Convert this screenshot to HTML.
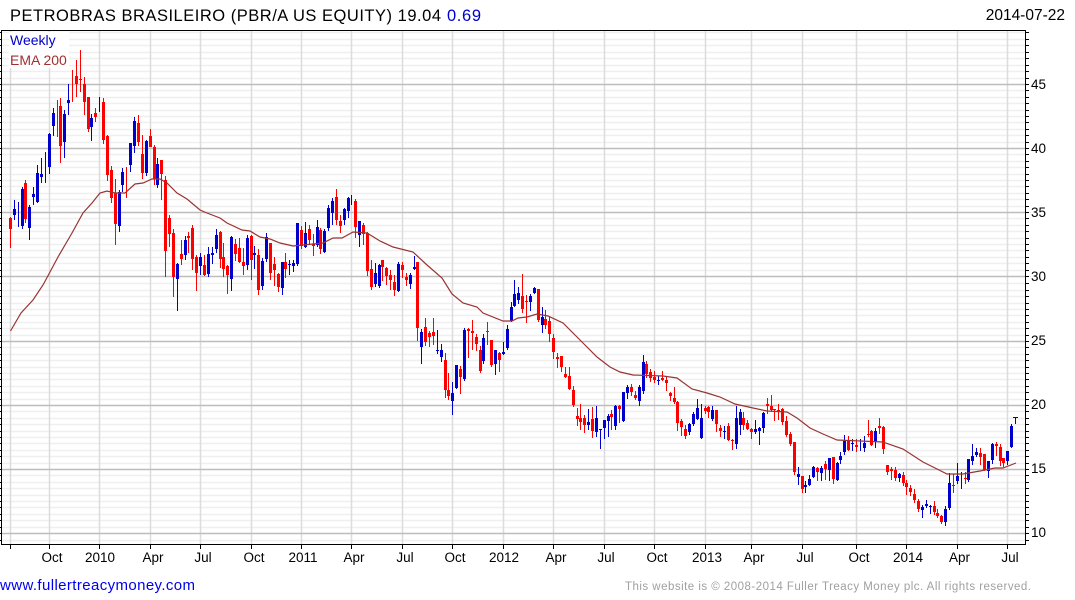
<!DOCTYPE html>
<html><head><meta charset="utf-8"><title>PBR/A</title>
<style>html,body{margin:0;padding:0;background:#fff;width:1075px;height:600px;overflow:hidden}svg{display:block}text{font-family:"Liberation Sans",Arial,sans-serif}</style></head>
<body>
<svg xmlns="http://www.w3.org/2000/svg" width="1075" height="600" viewBox="0 0 1075 600">
<defs>
<path id="r" d="M0 32.5H1030M0 39.5H1030M0 45.5H1030M0 52.5H1030M0 58.5H1030M0 65.5H1030M0 71.5H1030M0 78.5H1030M0 90.5H1030M0 97.5H1030M0 103.5H1030M0 110.5H1030M0 116.5H1030M0 122.5H1030M0 129.5H1030M0 135.5H1030M0 142.5H1030M0 154.5H1030M0 161.5H1030M0 167.5H1030M0 174.5H1030M0 180.5H1030M0 186.5H1030M0 193.5H1030M0 199.5H1030M0 206.5H1030M0 218.5H1030M0 225.5H1030M0 231.5H1030M0 238.5H1030M0 244.5H1030M0 250.5H1030M0 257.5H1030M0 263.5H1030M0 270.5H1030M0 283.5H1030M0 290.5H1030M0 296.5H1030M0 303.5H1030M0 309.5H1030M0 315.5H1030M0 322.5H1030M0 328.5H1030M0 335.5H1030M0 347.5H1030M0 354.5H1030M0 360.5H1030M0 367.5H1030M0 373.5H1030M0 379.5H1030M0 386.5H1030M0 392.5H1030M0 399.5H1030M0 411.5H1030M0 418.5H1030M0 424.5H1030M0 431.5H1030M0 437.5H1030M0 443.5H1030M0 450.5H1030M0 456.5H1030M0 463.5H1030M0 475.5H1030M0 482.5H1030M0 488.5H1030M0 495.5H1030M0 501.5H1030M0 507.5H1030M0 514.5H1030M0 520.5H1030M0 527.5H1030M0 540.5H1030"/>
<path id="m" d="M0 84.5H1030M0 148.5H1030M0 212.5H1030M0 276.5H1030M0 341.5H1030M0 405.5H1030M0 469.5H1030M0 533.5H1030"/>
<clipPath id="pl"><rect x="2" y="31" width="1024" height="513"/></clipPath>
<clipPath id="tk"><rect x="0" y="31" width="1029" height="513"/></clipPath>
</defs>
<g shape-rendering="crispEdges" fill="none" clip-path="url(#tk)">
<use href="#r" stroke="#000"/><use href="#m" stroke="#000"/>
</g>
<rect x="1" y="30" width="1025" height="515" fill="#fff"/>
<g fill="none" clip-path="url(#pl)">
<use href="#r" stroke="#efefef" stroke-width="1.5"/>
<path stroke="#dcdcdc" stroke-width="1.5" d="M10.5 31V544M49.5 31V544M99.5 31V544M150.5 31V544M200.5 31V544M251.5 31V544M301.5 31V544M351.5 31V544M402.5 31V544M452.5 31V544M503.5 31V544M553.5 31V544M604.5 31V544M654.5 31V544M705.5 31V544M751.5 31V544M802.5 31V544M856.5 31V544M906.5 31V544M957.5 31V544M1007.5 31V544"/>
<use href="#m" stroke="#bdbdbd" stroke-width="1.5"/>
</g>
<rect x="9" y="32" width="60" height="36" fill="#fff"/>
<g shape-rendering="crispEdges" fill="none">
<path stroke="#000" d="M1.5 30V545M1 30.5H1026M1 544.5H1026M1025.5 30V545"/>
<path stroke="#000" d="M10.5 545V549M49.5 545V549M99.5 545V549M150.5 545V549M200.5 545V549M251.5 545V549M301.5 545V549M351.5 545V549M402.5 545V549M452.5 545V549M503.5 545V549M553.5 545V549M604.5 545V549M654.5 545V549M705.5 545V549M751.5 545V549M802.5 545V549M856.5 545V549M906.5 545V549M957.5 545V549M1007.5 545V549"/>
</g>

<!-- blue wicks -->
<path fill="none" stroke="#0000cc" stroke-width="1" shape-rendering="crispEdges" d="M14.5 200V220M18.5 202V227M22.5 187V229M29.5 205V240M33.5 187V205M37.5 165V203M41.5 158V183M45.5 152V183M49.5 133V174M53.5 108V136M64.5 110V158M68.5 84V115M91.5 114V141M99.5 97V112M119.5 190V232M122.5 168V192M130.5 143V172M134.5 117V153M146.5 140V176M157.5 158V188M177.5 263V311M185.5 236V260M200.5 253V275M208.5 247V277M212.5 247V264M216.5 229V253M231.5 236V291M247.5 235V270M254.5 246V269M262.5 258V290M266.5 233V262M282.5 262V295M289.5 260V275M293.5 260V272M297.5 223V266M305.5 222V248M317.5 220V247M324.5 229V253M328.5 205V231M332.5 198V225M344.5 208V225M348.5 197V218M351.5 195V205M359.5 221V247M375.5 263V287M379.5 264V288M398.5 262V292M410.5 273V289M414.5 256V270M421.5 329V364M437.5 330V354M441.5 344V362M452.5 382V415M456.5 365V389M464.5 328V381M483.5 334V364M495.5 350V375M503.5 342V355M507.5 325V350M511.5 302V322M514.5 280V307M518.5 287V304M530.5 294V311M534.5 287V294M542.5 307V333M588.5 409V430M596.5 406V437M600.5 429V449M604.5 420V439M608.5 414V437M615.5 405V430M623.5 392V422M627.5 385V399M639.5 385V406M643.5 355V394M658.5 376V385M689.5 423V435M693.5 412V426M697.5 399V420M701.5 404V439M712.5 406V421M724.5 426V439M736.5 406V449M740.5 409V435M755.5 420V434M759.5 427V445M763.5 412V433M798.5 467V485M805.5 481V493M809.5 475V486M813.5 466V478M821.5 466V481M829.5 458V481M837.5 462V481M840.5 452V464M844.5 435V455M852.5 439V451M860.5 439V451M864.5 436V452M875.5 428V448M899.5 473V482M922.5 505V518M926.5 500V508M930.5 505V514M945.5 506V526M949.5 473V510M957.5 463V484M961.5 472V489M968.5 459V482M972.5 444V465M976.5 448V457M988.5 461V478M992.5 443V464M1007.5 451V465M1011.5 424V448M1015.5 417V424M1013 417.5H1018"/>
<!-- blue bodies -->
<path fill="none" stroke="#0000cc" stroke-width="3" shape-rendering="crispEdges" d="M14.5 209V215M22.5 189V226M29.5 207V228M33.5 194V197M37.5 173V202M41.5 174V177M49.5 134V167M53.5 113V126M64.5 114V142M68.5 100V103M91.5 118V127M119.5 192V226M122.5 172V185M130.5 143V165M134.5 121V146M146.5 141V173M157.5 164V185M177.5 264V279M185.5 240V255M200.5 257V266M208.5 254V274M212.5 253V255M216.5 235V249M231.5 237V279M247.5 238V265M254.5 253V255M262.5 261V286M266.5 237V259M282.5 262V288M289.5 264V265M293.5 263V266M297.5 223V264M305.5 233V247M317.5 227V245M324.5 231V252M328.5 208V228M332.5 201V213M344.5 209V220M348.5 198V211M359.5 221V235M375.5 273V284M379.5 265V286M398.5 264V291M410.5 275V284M414.5 267V269M421.5 332V347M437.5 350V351M441.5 350V357M452.5 393V401M456.5 365V388M464.5 330V379M483.5 338V361M495.5 350V364M503.5 352V354M507.5 329V348M511.5 307V321M514.5 294V306M518.5 293V300M530.5 296V302M534.5 288V293M542.5 317V325M588.5 422V425M596.5 418V432M600.5 429V430M604.5 420V428M608.5 416V421M615.5 406V426M623.5 392V421M627.5 387V393M639.5 387V401M643.5 362V391M658.5 380V381M689.5 424V432M693.5 414V424M697.5 408V419M701.5 418V438M712.5 410V419M724.5 431V432M736.5 418V444M740.5 412V425M755.5 429V432M759.5 428V431M763.5 413V428M798.5 474V477M805.5 485V487M809.5 479V485M813.5 467V477M821.5 468V473M829.5 458V470M837.5 463V480M840.5 456V460M844.5 441V452M852.5 443V444M864.5 443V448M875.5 431V442M899.5 474V478M922.5 507V510M926.5 504V506M930.5 506V507M945.5 509V522M949.5 483V508M957.5 476V481M968.5 459V480M972.5 456V461M976.5 452V455M988.5 461V471M992.5 444V460M1007.5 451V461M1011.5 426V447"/>
<!-- red wicks -->
<path fill="none" stroke="#ff0000" stroke-width="1" shape-rendering="crispEdges" d="M10.5 217V248M25.5 180V223M57.5 100V137M60.5 98V163M72.5 70V102M76.5 60V97M80.5 50V92M84.5 77V115M88.5 97V132M95.5 108V122M103.5 98V144M107.5 135V181M111.5 166V203M115.5 179V245M126.5 167V198M138.5 115V146M142.5 135V179M150.5 129V147M154.5 145V185M161.5 160V200M165.5 176V277M169.5 215V247M173.5 229V297M181.5 240V265M188.5 232V253M192.5 225V270M196.5 255V291M204.5 255V276M220.5 231V268M223.5 243V277M227.5 265V294M235.5 239V261M239.5 238V263M243.5 248V275M251.5 235V280M258.5 249V295M270.5 243V280M274.5 257V286M278.5 273V292M285.5 253V278M301.5 226V249M309.5 225V244M313.5 234V256M320.5 228V254M336.5 189V225M340.5 215V233M355.5 199V238M363.5 223V245M367.5 232V276M371.5 260V290M382.5 260V281M386.5 267V285M390.5 270V290M394.5 275V296M402.5 262V278M406.5 273V286M417.5 262V341M425.5 318V346M429.5 331V347M433.5 318V345M445.5 353V398M448.5 373V400M460.5 366V394M468.5 328V358M472.5 320V350M476.5 334V351M480.5 346V373M487.5 322V345M491.5 340V367M499.5 352V372M522.5 274V313M526.5 295V323M538.5 289V322M545.5 310V329M549.5 317V342M553.5 334V359M557.5 353V368M561.5 356V372M565.5 367V378M569.5 367V390M573.5 386V407M577.5 408V426M580.5 404V430M584.5 415V433M592.5 407V438M611.5 410V430M619.5 405V423M631.5 384V396M635.5 391V400M646.5 361V378M650.5 369V382M654.5 371V383M662.5 371V381M666.5 376V391M670.5 392V401M674.5 387V404M677.5 401V431M681.5 419V436M685.5 425V439M705.5 406V414M708.5 406V418M716.5 410V432M720.5 425V437M728.5 423V441M732.5 439V450M743.5 412V430M747.5 420V430M751.5 428V439M767.5 398V414M771.5 395V412M774.5 409V421M778.5 404V420M782.5 408V425M786.5 416V437M790.5 432V446M794.5 442V475M802.5 476V493M817.5 467V481M825.5 461V480M833.5 457V484M848.5 436V451M856.5 439V452M868.5 420V437M871.5 430V446M879.5 418V434M883.5 426V454M887.5 465V475M891.5 467V480M895.5 467V481M903.5 472V486M906.5 480V495M910.5 485V496M914.5 489V503M918.5 499V512M934.5 501V515M937.5 509V518M941.5 515V524M953.5 474V493M965.5 472V484M980.5 448V465M984.5 454V471M996.5 442V456M1000.5 444V466M1003.5 458V467"/>
<!-- red bodies -->
<path fill="none" stroke="#ff0000" stroke-width="3" shape-rendering="crispEdges" d="M10.5 218V229M25.5 183V219M60.5 106V146M76.5 76V84M80.5 79V80M84.5 84V102M88.5 97V129M95.5 113V117M103.5 102V140M107.5 136V175M111.5 170V198M115.5 193V224M138.5 123V142M142.5 154V173M150.5 136V147M154.5 147V179M161.5 160V174M165.5 180V251M169.5 218V234M173.5 233V277M181.5 254V259M188.5 236V238M192.5 228V259M196.5 257V273M204.5 265V275M220.5 232V259M223.5 257V269M227.5 266V275M235.5 244V254M239.5 248V262M243.5 262V266M251.5 236V260M258.5 255V290M270.5 243V273M274.5 264V270M278.5 274V287M285.5 262V269M301.5 230V246M309.5 229V240M313.5 244V246M320.5 230V249M336.5 197V220M340.5 221V226M355.5 201V227M363.5 225V234M367.5 233V271M371.5 269V287M382.5 260V267M386.5 268V276M390.5 275V280M394.5 282V290M402.5 265V270M406.5 277V280M417.5 262V328M425.5 327V342M429.5 333V337M433.5 332V336M445.5 360V390M448.5 390V396M460.5 369V377M468.5 329V331M472.5 331V333M476.5 337V344M480.5 350V371M487.5 331V332M491.5 340V365M499.5 353V360M522.5 296V309M526.5 301V302M538.5 289V320M545.5 319V325M549.5 321V334M553.5 338V352M557.5 357V359M561.5 356V367M565.5 374V377M569.5 376V389M573.5 390V405M577.5 416V419M580.5 418V422M584.5 418V425M592.5 419V431M611.5 414V417M619.5 406V409M631.5 387V392M635.5 395V398M646.5 364V374M650.5 372V378M654.5 377V380M662.5 378V380M666.5 380V383M670.5 393V396M674.5 398V402M677.5 402V423M681.5 421V427M685.5 429V436M705.5 408V411M708.5 407V412M716.5 410V424M720.5 428V431M728.5 426V440M732.5 440V441M743.5 418V425M747.5 423V429M751.5 429V432M767.5 404V406M771.5 406V410M774.5 409V410M778.5 410V411M782.5 409V422M786.5 421V435M790.5 434V444M794.5 442V472M802.5 476V489M817.5 468V472M825.5 464V469M833.5 457V479M848.5 440V450M856.5 445V447M868.5 434V435M871.5 431V445M879.5 426V428M883.5 427V449M887.5 465V472M891.5 469V471M895.5 470V478M903.5 475V483M906.5 483V487M910.5 488V492M914.5 494V500M918.5 501V509M934.5 506V512M937.5 513V516M941.5 516V522M953.5 485V486M965.5 478V479M980.5 453V457M984.5 454V470M996.5 444V446M1000.5 447V461M1003.5 458V463"/>
<!-- EMA -->
<polyline fill="none" stroke="#993333" stroke-width="1.2" points="10.5,331 21,313 33,300 43,285 50,272 58,257 72,233 83,213 92,203 100,193 107,191 115,193 125,193 135,184 143,183 152,179 160,179 167,183 177,193 187,199 200,210 207,213 220,218 227,223 242,230 250,231 260,237 270,239 280,243 293,246 303,245 323,243 333,238 342,238 353,232 367,233 380,241 393,247 413,252 427,265 442,278 452,294 463,303 477,307 483,313 503,321 512,321 518,318 527,317 537,314 548,316 563,323 580,340 597,357 610,367 620,372 633,375 663,376 677,378 692,389 707,393 720,397 735,404 753,408 767,411 787,412 797,418 810,428 823,434 837,440 860,441 883,442 903,449 923,462 937,469 947,474 963,474 980,471 995,468 1003,468 1016,463"/>

<text x="10" y="21" font-size="16.5" fill="#000" textLength="431" lengthAdjust="spacing">PETROBRAS BRASILEIRO (PBR/A US EQUITY) 19.04</text>
<text x="447" y="21" font-size="16.5" fill="#0000cc" textLength="34" lengthAdjust="spacing">0.69</text>
<text x="1065" y="20" font-size="15.5" fill="#000" text-anchor="end">2014-07-22</text>
<text x="10" y="45" font-size="14" fill="#0000cc">Weekly</text>
<text x="10" y="65" font-size="14" fill="#a03030">EMA 200</text>

<g font-size="13.5" fill="#000">
<text x="1031" y="89">45</text><text x="1031" y="153">40</text><text x="1031" y="217">35</text><text x="1031" y="281">30</text><text x="1031" y="345">25</text><text x="1031" y="409">20</text><text x="1031" y="473">15</text><text x="1031" y="537">10</text>
</g>
<g font-size="13.5" fill="#000" text-anchor="middle">
<text x="52" y="562">Oct</text><text x="100" y="562">2010</text><text x="153" y="562">Apr</text><text x="203" y="562">Jul</text><text x="254" y="562">Oct</text><text x="303" y="562">2011</text><text x="354" y="562">Apr</text><text x="405" y="562">Jul</text><text x="455" y="562">Oct</text><text x="504" y="562">2012</text><text x="556" y="562">Apr</text><text x="606" y="562">Jul</text><text x="657" y="562">Oct</text><text x="707" y="562">2013</text><text x="754" y="562">Apr</text><text x="805" y="562">Jul</text><text x="859" y="562">Oct</text><text x="908" y="562">2014</text><text x="959.5" y="562">Apr</text><text x="1010" y="562">Jul</text>
</g>
<text x="0" y="590" font-size="15" fill="#0000ee" textLength="195" lengthAdjust="spacing">www.fullertreacymoney.com</text>
<text x="625" y="590" font-size="11.5" fill="#a0a0a0" textLength="406" lengthAdjust="spacing">This website is © 2008-2014 Fuller Treacy Money plc. All rights reserved.</text>
</svg>
</body></html>
